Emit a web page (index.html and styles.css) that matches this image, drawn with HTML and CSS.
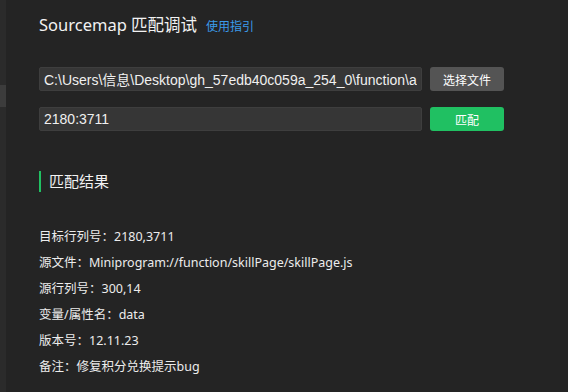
FILE: index.html
```html
<!DOCTYPE html>
<html lang="zh-CN">
<head>
  <meta charset="UTF-8">
  <title>Sourcemap 匹配调试</title>
  <link rel="stylesheet" href="styles.css">
</head>
<body>
  <div class="page">
    <!-- 左侧窄栏 -->
    <div class="side">
      <div class="side-mark"></div>
    </div>

    <div class="main">
      <div class="title">
        <h1>Sourcemap 匹配调试</h1>
        <a class="guide" href="#">使用指引</a>
      </div>

      <div class="row">
        <input class="field" type="text" value="C:\Users\信息\Desktop\gh_57edb40c059a_254_0\function\app-service.map.json" readonly>
        <button class="btn btn-gray">选择文件</button>
      </div>
      <div class="row">
        <input class="field" type="text" value="2180:3711">
        <button class="btn btn-green">匹配</button>
      </div>

      <h2 class="section">匹配结果</h2>

      <ul class="result">
        <li>目标行列号：2180,3711</li>
        <li>源文件：Miniprogram://function/skillPage/skillPage.js</li>
        <li>源行列号：300,14</li>
        <li>变量/属性名：data</li>
        <li>版本号：12.11.23</li>
        <li>备注：修复积分兑换提示bug</li>
      </ul>
    </div>
  </div>
</body>
</html>
```

FILE: styles.css
```css
html, body {
  margin: 0;
  height: 100%;
  background-color: #242424;
}

body {
  font-family: "Noto Sans", "Noto Sans CJK SC", sans-serif;
  color: #ececec;
  overflow: hidden;
}

.page {
  display: flex;
  height: 100%;
}

/* 左侧窄栏 */
.side {
  width: 6px;
  background-color: #2b2b2b;
  padding-top: 85px;
}
.side-mark {
  height: 22px;
  background-color: #3c3c3c;
}

.main {
  flex: 1;
  padding: 12px 0 0 33px;
}

.title {
  display: flex;
  align-items: baseline;
  gap: 9px;
  height: 25px;
}
.title h1 {
  margin: 0;
  font-size: 16.5px;
  font-weight: normal;
  color: #f2f2f2;
}
.guide {
  font-size: 12px;
  color: #3b9bea;
  text-decoration: none;
}

.row {
  display: flex;
  gap: 8px;
  margin-top: 30px;
  width: 465px;
}
.row + .row {
  margin-top: 16px;
}

.field {
  box-sizing: border-box;
  width: 383px;
  height: 24px;
  padding: 0 4px;
  background-color: #363636;
  border: 1px solid #3e3e3e;
  border-radius: 2px;
  color: #f0f0f0;
  font-family: "Liberation Sans", "Noto Sans CJK SC", sans-serif;
  font-size: 14px;
  outline: none;
}

.btn {
  width: 74px;
  height: 24px;
  border: none;
  border-radius: 3px;
  color: #fff;
  font-family: "Noto Sans CJK SC", sans-serif;
  font-size: 12px;
  cursor: pointer;
}
.btn-gray {
  background-color: #545454;
}
.btn-green {
  background-color: #20c062;
}

.section {
  margin: 40px 0 0 0;
  padding-left: 8px;
  border-left: 2px solid #20c062;
  height: 21px;
  line-height: 21px;
  font-size: 15px;
  font-weight: normal;
  color: #f2f2f2;
}

/* 冒号居中，用繁体字形 */
.result {
  list-style: none;
  margin: 32px 0 0 0;
  padding: 0;
  font-family: "Noto Sans", "Noto Sans CJK TC", sans-serif;
  font-size: 12.5px;
}
.result li {
  height: 26px;
  line-height: 26px;
}
```
